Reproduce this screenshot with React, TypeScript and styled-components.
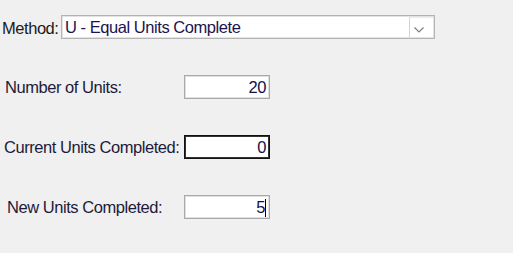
import React from "react";
import styled, { createGlobalStyle } from "styled-components";

const Global = createGlobalStyle`
  html, body { margin: 0; padding: 0; background: #f0f0f0; }
  body { font-family: "Liberation Sans", Arial, sans-serif; }
`;

const Form = styled.div`
  width: 513px;
  height: 253px;
  background: #f0f0f0;
  box-sizing: border-box;
  padding-top: 15px;
  display: flex;
  flex-direction: column;
  gap: 36px;
  font-family: "Liberation Sans", Arial, sans-serif;
  font-size: 16.5px;
  letter-spacing: -0.45px;
  color: #1b1b1b;
`;

const MethodRow = styled.div`
  display: flex;
  align-items: stretch;
  height: 24px;
`;

const MethodLabel = styled.div`
  width: 61px;
  padding-left: 2px;
  padding-top: 2px;
  line-height: 22px;
  white-space: nowrap;
  box-sizing: border-box;
`;

const Combo = styled.div`
  width: 374px;
  height: 24px;
  box-sizing: border-box;
  border: 1px solid #b4b4b4;
  box-shadow: inset 0 0 0 1px #e3e3e3;
  background: #fff;
  display: flex;
  align-items: stretch;
`;

const ComboText = styled.div`
  flex: 1;
  padding-left: 3px;
  padding-top: 1px;
  line-height: 20px;
  color: #1b1450;
  white-space: nowrap;
`;

const ComboButton = styled.div`
  width: 24px;
  margin: 1px 1px 1px 0;
  box-sizing: border-box;
  border-left: 1px solid #d5d5d5;
  border-top: 1px solid #ececec;
  background: #fff;
  display: flex;
  align-items: flex-end;
  justify-content: flex-start;
  padding: 0 0 4px 4px;
`;

const FieldRow = styled.div`
  display: grid;
  grid-template-columns: 184px 86px;
  height: 24px;
`;

const FieldLabel = styled.div<{ $indent: number }>`
  padding-left: ${(p) => p.$indent}px;
  padding-top: 1px;
  line-height: 22px;
  white-space: nowrap;
  color: #1e1a3a;
`;

const TextBox = styled.div<{ $focused?: boolean }>`
  height: 24px;
  box-sizing: border-box;
  background: #fff;
  border: 1px solid ${(p) => (p.$focused ? "#111" : "#a9a9a9")};
  box-shadow: inset 0 0 0 1px ${(p) => (p.$focused ? "#333" : "#e0e0e0")};
  text-align: right;
  padding-right: 3px;
  padding-top: 1px;
  line-height: 20px;
  color: #10104a;
  display: flex;
  justify-content: flex-end;
  align-items: flex-start;
`;

const Caret = styled.span`
  display: inline-block;
  width: 1px;
  height: 18px;
  margin-top: 2px;
  background: #000;
`;

export default function App() {
  return (
    <>
      <Global />
      <Form>
        <MethodRow>
          <MethodLabel>Method:</MethodLabel>
          <Combo>
            <ComboText>U - Equal Units Complete</ComboText>
            <ComboButton>
              <svg width="10" height="6" viewBox="0 0 10 6">
                <polyline points="0.5,0.5 5,5 9.5,0.5" fill="none" stroke="#7a7a7a" strokeWidth="1.1" />
              </svg>
            </ComboButton>
          </Combo>
        </MethodRow>
        <FieldRow>
          <FieldLabel $indent={5}>Number of Units:</FieldLabel>
          <TextBox>20</TextBox>
        </FieldRow>
        <FieldRow>
          <FieldLabel $indent={4}>Current Units Completed:</FieldLabel>
          <TextBox $focused>0</TextBox>
        </FieldRow>
        <FieldRow>
          <FieldLabel $indent={7}>New Units Completed:</FieldLabel>
          <TextBox>
            5<Caret />
          </TextBox>
        </FieldRow>
      </Form>
    </>
  );
}
